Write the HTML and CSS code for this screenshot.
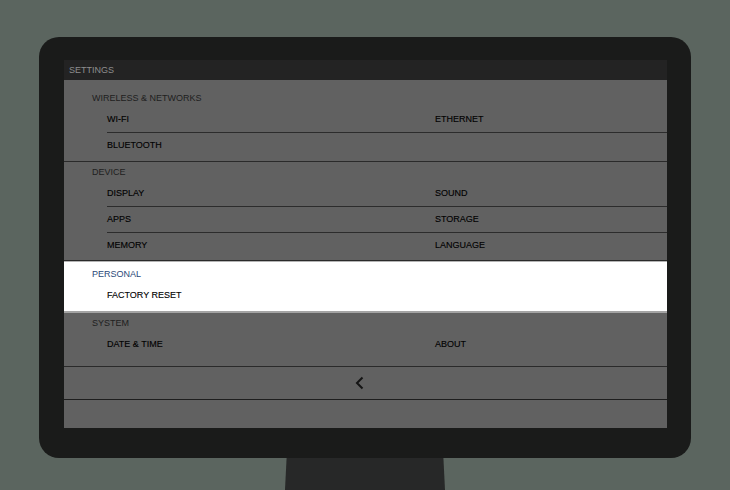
FILE: index.html
```
<html>
<head>
    <meta charset="UTF-8">
    <title>Settings</title>
    <link rel="stylesheet" href="styles.css">
</head>
<body>
    <div class="monitor">
        <div class="screen">
            <div class="titlebar">SETTINGS</div>

            <div class="section first">
                <div class="label">WIRELESS &amp; NETWORKS</div>
                <div class="row"><span>WI-FI</span><span>ETHERNET</span></div>
                <div class="row last"><span>BLUETOOTH</span><span></span></div>
            </div>

            <div class="section device">
                <div class="label">DEVICE</div>
                <div class="row"><span>DISPLAY</span><span>SOUND</span></div>
                <div class="row"><span>APPS</span><span>STORAGE</span></div>
                <div class="row last"><span>MEMORY</span><span>LANGUAGE</span></div>
            </div>

            <div class="section active">
                <div class="label">PERSONAL</div>
                <div class="row last"><span>FACTORY RESET</span><span></span></div>
            </div>

            <div class="section system">
                <div class="label">SYSTEM</div>
                <div class="row last"><span>DATE &amp; TIME</span><span>ABOUT</span></div>
            </div>

            <div class="backbar">
                <svg width="10" height="14" viewBox="0 0 10 14">
                    <path d="M7.5 1.5 L2 7 L7.5 12.5" fill="none" stroke="#141414" stroke-width="2"/>
                </svg>
            </div>
            <div class="bottom"></div>
        </div>
    </div>
    <div class="stand"></div>
</body>
</html>
```

FILE: styles.css
```
body {
    margin: 0;
    background: #5b655f;
    font-family: "Liberation Sans", Arial, sans-serif;
}

.monitor {
    margin: 37px 0 0 39px;
    width: 652px;
    height: 421px;
    box-sizing: border-box;
    padding: 23px 24px 30px 25px;
    background: #1a1b1a;
    border-radius: 20px;
}

.screen {
    height: 368px;
    background: #616161;
    display: flex;
    flex-direction: column;
}

.titlebar {
    height: 20px;
    line-height: 20px;
    background: #232323;
    color: #8e8e8e;
    font-size: 9px;
    padding-left: 5px;
}

.section {
    border-bottom: 1px solid #2a2a2a;
}

.section.first {
    padding-top: 8px;
    padding-bottom: 3px;
}

.section.device {
    padding-bottom: 2px;
}

.section.active {
    background: #ffffff;
    border-top: 1px solid #b4b4b4;
    border-bottom: 2px solid #a4a4a4;
    padding-top: 2px;
    padding-bottom: 3px;
}

.section.system {
    padding-bottom: 9px;
}

.label {
    height: 19px;
    line-height: 21px;
    padding-left: 28px;
    font-size: 9px;
    color: #1e1e1e;
}

.section.active .label {
    color: #2a4878;
}

.row {
    margin-left: 43px;
    height: 25px;
    line-height: 25px;
    border-bottom: 1px solid #2c2c2c;
    display: grid;
    grid-template-columns: 328px 1fr;
    font-size: 9px;
    color: #000000;
    -webkit-text-stroke: 0.12px #000000;
}

.row.last {
    border-bottom: none;
}

.backbar {
    height: 32px;
    border-bottom: 1px solid #1e1e1e;
    display: flex;
    align-items: center;
    justify-content: center;
    padding-right: 11px;
}

.bottom {
    flex: 1;
}

.stand {
    margin-left: 285px;
    width: 160px;
    height: 32px;
    background: #272828;
    clip-path: polygon(1% 0, 99% 0, 100% 100%, 0 100%);
}
```
